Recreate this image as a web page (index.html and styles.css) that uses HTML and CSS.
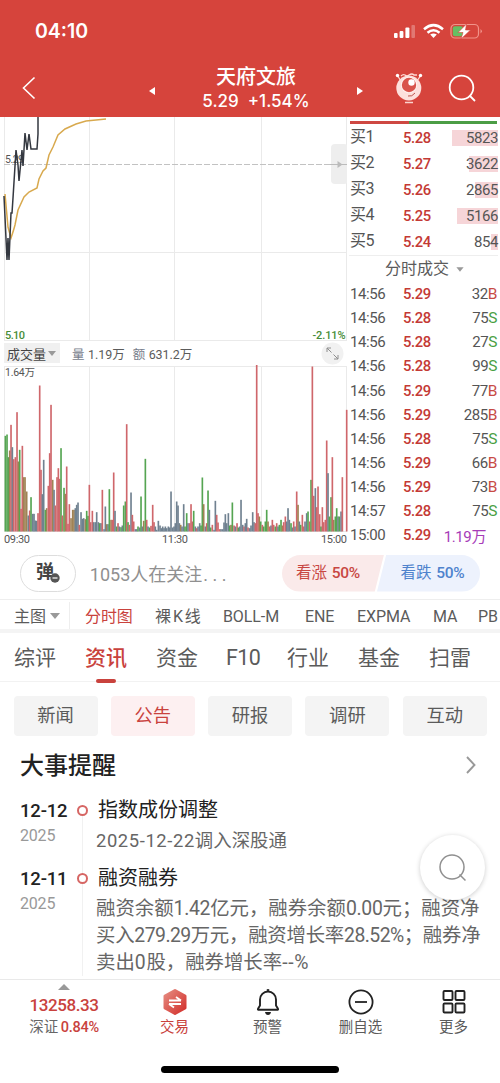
FILE: index.html
```html
<!DOCTYPE html>
<html lang="zh-CN">
<head>
<meta charset="utf-8">
<meta name="viewport" content="width=device-width">
<title>天府文旅</title>
<link rel="stylesheet" href="styles.css">
</head>
<body>
<div class="app">
  <header class="header">
    <div class="status">
      <span class="clock">04:10</span>
      <svg class="status-icons" width="90" height="18" viewBox="0 0 90 18">
        <g fill="#fff"><rect x="2" y="11" width="3.6" height="5" rx="1"/><rect x="7.6" y="9" width="3.8" height="7" rx="1"/><rect x="13.4" y="5.5" width="4" height="10.5" rx="1"/><rect x="19.4" y="3" width="3.6" height="13" rx="1" opacity=".28"/></g>
        <g fill="none" stroke="#fff" stroke-width="2.5"><path d="M32 7.2Q41.500-.9 51 7.200"/><path d="M35.500 10.700Q41.500 5.700 47.500 10.700"/></g><path d="M38.200 12.600Q41.500 10.200 44.800 12.600L41.500 16z" fill="#fff"/>
        <rect x="59" y="2.500" width="27.500" height="13.500" rx="4" fill="none" stroke="#f1938a" stroke-width="1.200"/><rect x="60.800" y="4.300" width="10" height="10" rx="2" fill="#66be63"/><path d="M88.500 7v4.500q3-2.200 0-4.500" fill="#f1938a"/><path d="M74.500 2L66 10.500h5L69 17l9.500-9h-5z" fill="#fff" stroke="#d5443d" stroke-width=".6"/>
      </svg>
    </div>
    <div class="navbar">
      <svg class="back" width="20" height="26" viewBox="0 0 20 26"><path d="M15.500 2.500L4.500 13l11 10.500" fill="none" stroke="#fff" stroke-width="1.600"/></svg>
      <svg class="prev" width="8" height="10" viewBox="0 0 8 10"><path d="M7 1v8L1 5z" fill="#fff"/></svg>
      <div class="title"><h1>天府文旅</h1><p><span>5.29</span><span>+1.54%</span></p></div>
      <svg class="next" width="8" height="10" viewBox="0 0 8 10"><path d="M1 1v8l6-4z" fill="#fff"/></svg>
      <svg class="robot" width="30" height="34" viewBox="0 0 30 34">
        <path d="M3 4l4 6M27 4l-4 6M7 5q2-2 4-1q2 2 4 0q3-2 5 0l3 0" stroke="#ffd8d2" stroke-width="1.300" fill="none"/><circle cx="3.500" cy="4.500" r="1.700" fill="#fff"/><circle cx="26.500" cy="4.500" r="1.700" fill="#fff"/>
        <circle cx="14.800" cy="17" r="12.500" fill="#fde0dc"/><circle cx="15" cy="14" r="8" fill="#fff5f3"/><circle cx="15" cy="14" r="7.200" fill="#d9544c"/><circle cx="17.500" cy="11.500" r="3.200" fill="#fff"/><path d="M14 25q4 1 7-3" stroke="#bd554e" stroke-width="1" fill="none"/><path d="M11 31.500h8" stroke="#fbd3cd" stroke-width="1.500"/>
      </svg>
      <svg class="find" width="32" height="32" viewBox="0 0 32 32" fill="none" stroke="#fff" stroke-width="1.800"><circle cx="14.500" cy="14.500" r="11.800"/><path d="M22.500 22.500l5.500 5.500"/></svg>
    </div>
  </header>

  <main class="market">
    <section class="charts">
      <svg width="347" height="225" viewBox="0 117 347 225">
        <g stroke="#eaeaea" fill="none"><path d="M4.500 117v224M89.500 117v224M174.500 117v224M261.500 117v224M346.500 117v224M4 252.500h343M4 340.500h343"/></g>
        <path d="M4 164.500h343" stroke="#c2c2c2" stroke-dasharray="6 2"/>
        <text x="5" y="163" class="axis" fill="#555" textLength="19">5.29</text>
        <path d="M5 194l3 33 3 11q3-9 4-13l3-15 6-13 5-5 8-4 2-9 4-8 3-3 3-13 4-8 5-12 7-6 11-5 10-3 20-2" fill="none" stroke="#d8a94e" stroke-width="1.500"/>
        <path d="M4 196l3 64 1-22 1 22 2-47h1l1-15 3-48 2 15 1 16 3-31 1 16 2-33 2 17 2-16 2 15h6l1-15v-17" fill="none" stroke="#343840" stroke-width="1.500"/>
        <rect x="331" y="144" width="17" height="40" rx="4" fill="#eee"/><path d="M330 164.500h17" stroke="#bbb"/><path d="M337.500 161l5 3.500-5 3.500z" fill="#bbb"/>
        <text x="5" y="339" class="axis strong" fill="#468c38" textLength="20">5.10</text><text x="312.500" y="339" class="axis strong" fill="#468c38" textLength="33">-2.11%</text>
      </svg>
      <div class="volume-head">
        <span class="metric">成交量<i class="caret"></i></span><span class="lab">量</span><span class="val">1.19万</span><span class="lab">额</span><span class="val">631.2万</span>
        <svg class="expand" width="23" height="23" viewBox="0 0 23 23"><circle cx="11.500" cy="11.500" r="11" fill="#f1f1f1"/><path d="M6 10V6h4M6 6l4.500 4.500M17 13v4h-4M17 17l-4.500-4.500" fill="none" stroke="#8e8e8e"/></svg>
      </div>
      <svg width="349" height="181" viewBox="0 365 349 181">
        <path d="M4.500 366v166M89.500 366v166M174.500 366v166M261.500 366v166M346.500 366v166M4 366.500h343M4 531.500h343" stroke="#eaeaea" fill="none"/>
        <g id="volume"></g>
        <text x="5" y="375.500" class="axis" textLength="30">1.64万</text><text x="4" y="542.500" class="axis time" textLength="26">09:30</text><text x="162" y="542.500" class="axis time" textLength="26">11:30</text><text x="321" y="542.500" class="axis time" textLength="26">15:00</text>
      </svg>
    </section>
    <section class="book">
      <div class="ratio"><i></i><b></b></div>
      <div class="bids">
        <div><span>买1</span><b>5.28</b><em style="--w:46px">5823</em></div>
        <div><span>买2</span><b>5.27</b><em style="--w:29px">3622</em></div>
        <div><span>买3</span><b>5.26</b><em style="--w:23px">2865</em></div>
        <div><span>买4</span><b>5.25</b><em style="--w:41px">5166</em></div>
        <div><span>买5</span><b>5.24</b><em style="--w:7px">854</em></div>
      </div>
      <h2>分时成交<i class="caret"></i></h2>
      <div class="ticks">
        <div><span>14:56</span><b>5.29</b><em>32<i class="up">B</i></em></div>
        <div><span>14:56</span><b>5.28</b><em>75<i>S</i></em></div>
        <div><span>14:56</span><b>5.28</b><em>27<i>S</i></em></div>
        <div><span>14:56</span><b>5.28</b><em>99<i>S</i></em></div>
        <div><span>14:56</span><b>5.29</b><em>77<i class="up">B</i></em></div>
        <div><span>14:56</span><b>5.29</b><em>285<i class="up">B</i></em></div>
        <div><span>14:56</span><b>5.28</b><em>75<i>S</i></em></div>
        <div><span>14:56</span><b>5.29</b><em>66<i class="up">B</i></em></div>
        <div><span>14:56</span><b>5.29</b><em>73<i class="up">B</i></em></div>
        <div><span>14:57</span><b>5.28</b><em>75<i>S</i></em></div>
        <div><span>15:00</span><b>5.29</b><em class="total">1.19万</em></div>
      </div>
    </section>
  </main>

  <section class="poll">
    <div class="danmu">弹<svg width="10" height="10" viewBox="0 0 10 10"><circle cx="5" cy="5" r="4.700" fill="#555"/><path d="M2.500 5h5" stroke="#fff" stroke-width="1.200"/></svg></div>
    <span class="watch">1053人在关注<u>...</u></span>
    <div class="vote"><span class="bull">看涨 <b>50%</b></span><span class="bear">看跌 <b>50%</b></span></div>
  </section>
  <nav class="indicators"><span class="first">主图<i class="caret"></i></span><span class="on">分时图</span><span class="k">裸<u>K</u>线</span><span>BOLL-M</span><span>ENE</span><span>EXPMA</span><span>MA</span><span>PB</span></nav>
  <nav class="tabs"><span>综评</span><span class="on">资讯</span><span>资金</span><span class="f10">F10</span><span>行业</span><span>基金</span><span>扫雷</span></nav>
  <div class="chips"><span>新闻</span><span class="on">公告</span><span>研报</span><span>调研</span><span>互动</span></div>
  <section class="events">
    <div class="events-head"><h2>大事提醒</h2><svg width="12" height="20" viewBox="0 0 12 20"><path d="M2 2l7.500 8L2 18" fill="none" stroke="#999" stroke-width="1.900"/></svg></div>
    <div class="timeline">
      <article class="one"><div class="date"><b>12-12</b><small>2025</small></div><i class="dot"></i><div class="body"><h3>指数成份调整</h3><p class="short"><u>2025-12-22</u>调入深股通</p></div></article>
      <article><div class="date"><b>12-11</b><small>2025</small></div><i class="dot"></i><div class="body"><h3>融资融券</h3><p class="line-a">融资余额<u>1.42</u>亿元，融券余额<u>0.00</u>元；融资净</p><p class="line-b">买入<u>279.29</u>万元，融资增长率<u>28.52%</u>；融券净</p><p class="line-c">卖出<u>0</u>股，融券增长率<u>--%</u></p></div></article>
    </div>
    <div class="float"><svg width="30" height="30" viewBox="0 0 30 30" fill="none" stroke="#909090" stroke-width="1.500"><circle cx="14" cy="14" r="12"/><path d="M21.500 21.500l6 6"/></svg></div>
  </section>
  <footer class="bottom">
    <div class="index"><i class="tri"></i><b>13258.33</b><span>深证 <strong>0.84%</strong></span></div>
    <div class="trade"><svg width="26" height="28" viewBox="0 0 26 28"><defs><linearGradient id="hex" x1="0" y1="0" x2="1" y2="1"><stop stop-color="#e58b80"/><stop offset="1" stop-color="#d32f2b"/></linearGradient></defs><path d="M13 2.500L23 8v12l-10 5.500L3 20V8z" fill="url(#hex)" stroke="url(#hex)" stroke-width="3" stroke-linejoin="round"/><path d="M7 12.500h12M14 9l5 3.500M7 16h12M7 16l5 3.500" fill="none" stroke="#fff" stroke-width="1.800"/></svg><span>交易</span></div>
    <div><svg width="26" height="28" viewBox="0 0 26 28" fill="none" stroke="#222" stroke-width="1.900"><path d="M5 17.500V11.500a8 8 0 0 1 16 0v6l2 3.300q.5 1-1 1H4q-1.500 0-1-1z" stroke-linejoin="round"/><path d="M12 2.600q1-1 2 0"/><path d="M10 24h6q-.5 3-3 3t-3-3" fill="#222" stroke="none"/></svg><span>预警</span></div>
    <div><svg width="26" height="28" viewBox="0 0 26 28" fill="none" stroke="#222" stroke-width="1.800"><circle cx="13" cy="14" r="11.600"/><path d="M7 14h12"/></svg><span>删自选</span></div>
    <div><svg width="26" height="28" viewBox="0 0 26 28" fill="none" stroke="#222" stroke-width="1.900"><rect x="2.500" y="3" width="9" height="9" rx="1"/><rect x="14.500" y="3" width="9" height="9" rx="1"/><rect x="2.500" y="15.500" width="9" height="9" rx="1"/><rect x="14.500" y="15.500" width="9" height="9" rx="1"/></svg><span>更多</span></div>
    <i class="home"></i>
  </footer>
</div>
<script src="volume.js"></script>
</body>
</html>
```
FILE: volume.js
```js
// Each entry: position, top edge and colour (r up, g down, s flat, o mixed), in thirds of a pixel.
const bars = `16,228,g 21,224,g 25,292,g 29,272,o 33,195,r 37,262,s 41,298,r 46,292,r 51,157,r 55,305,o 59,270,g 63,447,r 67,258,r 71,352,o 75,352,o 80,395,o 85,467,s 89,452,r 93,412,g 98,462,s 102,462,s 106,482,s 110,483,s 114,460,r 119,77,r 123,330,r 127,403,s 131,300,s 136,450,g 140,445,o 145,378,r 149,280,r 153,135,r 158,360,o 162,390,s 166,437,r 171,352,r 175,325,r 179,357,r 183,265,g 187,467,r 192,384,g 196,402,o 200,320,r 204,492,r 208,433,r 213,475,o 218,450,o 222,450,o 226,445,s 230,435,s 234,428,s 238,495,r 243,457,s 247,477,s 251,475,s 256,478,o 260,453,g 264,468,g 268,375,r 272,487,r 277,453,r 281,487,s 286,487,s 290,457,s 295,487,s 299,490,g 303,490,s 307,390,r 312,508,s 316,440,s 320,493,o 324,493,s 328,388,g 333,480,o 337,480,r 341,338,r 345,453,s 350,500,g 354,490,r 358,500,s 363,502,g 367,497,s 371,437,g 376,425,g 380,193,r 384,487,g 388,495,r 393,398,s 397,465,r 401,485,r 406,508,s 410,508,s 414,500,g 419,503,s 423,410,g 427,500,s 431,483,o 436,297,g 440,480,r 444,500,s 449,503,g 453,498,r 458,435,r 462,487,r 466,500,s 470,510,s 475,483,s 480,497,s 484,505,s 488,500,s 492,505,s 496,500,s 500,505,s 505,500,s 509,503,s 513,395,s 518,503,s 522,500,s 526,490,s 530,425,s 534,437,s 538,490,s 542,495,o 546,500,s 551,433,s 555,500,g 560,460,g 564,490,s 569,490,r 573,433,r 577,485,r 581,453,g 586,500,s 590,505,r 594,500,s 599,490,s 603,497,g 607,353,g 611,433,o 616,500,s 620,490,r 624,392,g 628,450,s 632,503,g 637,495,r 642,510,s 646,423,s 650,465,r 654,488,r 659,508,r 663,508,s 668,508,s 672,488,s 676,463,s 680,490,s 685,460,s 689,497,g 693,495,o 697,428,g 702,497,r 706,500,s 711,490,r 715,503,g 719,500,s 723,420,s 728,495,s 732,500,r 736,490,s 740,477,s 744,503,r 749,505,s 753,497,s 758,457,s 762,487,s 766,490,r 770,15,r 774,460,r 778,470,o 782,485,g 787,495,r 791,500,g 796,485,g 800,450,g 804,485,o 809,500,r 813,497,s 817,480,r 821,495,r 826,500,g 830,490,r 834,500,s 838,495,g 843,480,g 847,497,o 851,487,r 856,470,r 860,485,s 864,445,s 868,480,s 873,490,g 877,503,s 881,485,r 885,500,s 890,395,r 894,435,o 898,485,s 902,495,g 907,465,r 911,500,r 915,485,s 920,460,s 924,455,g 929,485,r 933,360,g 937,20,r 941,408,r 946,385,s 950,442,r 954,380,r 959,463,r 963,500,g 967,442,r 971,487,r 976,480,r 980,242,r 984,340,s 988,470,g 993,412,g 997,292,r 1001,480,o 1006,470,g 1010,445,g 1014,470,s 1018,470,g 1023,455,s 1027,352,r 1040,150,r`;
const colors = { r: "#cf676b", g: "#55a552", s: "#708190", o: "#a08254" };
document.getElementById("volume").innerHTML = bars.split(" ").map(item => {
  const [x, top, color] = item.split(",");
  const height = (515 - top) / 3;
  return `<rect x="${(x / 3 - 0.8).toFixed(2)}" y="${(531.5 - height).toFixed(2)}" width="1.65" height="${height.toFixed(2)}" fill="${colors[color]}"/>`;
}).join("");
```
FILE: styles.css
```css
* { box-sizing: border-box; }
body { margin: 0; background: #fff; color: #5b5b5b; font-family: Roboto, "Noto Sans CJK SC", sans-serif; }
h1, h2, h3, p { margin: 0; font-weight: 400; }
i, em { font-style: normal; }
u { text-decoration: none; }
.app { width: 500px; height: 1083px; overflow: hidden; display: flex; flex-direction: column; }
.app > * { flex-shrink: 0; }
.header { height: 117px; background: #d6443c; color: #fff; }
.status { height: 60px; padding: 19px 18px 0 35px; display: flex; justify-content: space-between; }
.status-icons { margin-top: 3px; }
.clock { font: 600 19.5px/24px Inter, sans-serif; letter-spacing: 0; }
.navbar { height: 57px; display: grid; grid-template-columns: 20px 109px 8px 31px 138px 31px 8px 30px 30px 23px 32px; padding-left: 19px; align-items: start; }
.back { margin-top: 15px; }
.prev { grid-column: 3; margin-top: 26px; }
.title { grid-column: 5; text-align: center; }
.title h1 { font-size: 20px; line-height: 26px; font-weight: 500; margin-top: 4px; }
.title p { display: flex; justify-content: center; gap: 9px; font: 500 17px/22px Inter, sans-serif; }
.next { grid-column: 7; margin-top: 26px; }
.robot { grid-column: 9; margin-top: 11px; }
.find { grid-column: 11; margin-top: 13px; }

.market { height: 430px; display: flex; }
.charts { width: 349px; }
.charts > svg { display: block; }
.axis { font-size: 10.5px; fill: #555; }
.strong { font-size: 11px; font-weight: 500; fill: #468c38; }
.time { font-size: 11px; }
.volume-head { height: 23px; display: flex; align-items: center; padding: 0 0 1px 4px; font-size: 12.5px; letter-spacing: -.05px; }
.metric { width: 56px; height: 20px; padding-left: 3px; background: #f0f0f0; display: flex; align-items: center; gap: 2px; color: #444; font-size: 13px; }
.caret { display: inline-block; border: 4px solid transparent; border-top: 5px solid #999; border-bottom: 0; }
.lab { margin-left: 12px; width: 12px; color: #777d8b; }
.volume-head .lab + .val { margin-left: 4px; }
.volume-head .val + .lab { margin-left: 8px; }
.expand { margin-left: auto; margin-right: 5px; }
.book { width: 151px; padding-right: 2px; }
.ratio { margin: 4px 1px 0; height: 3px; display: flex; }
.ratio i { width: 59px; background: #ce4842; }
.ratio b { flex: 1; background: #4b9d45; }
.bids, .ticks { font-size: 15px; letter-spacing: -.4px; color: #555; }
.bids { padding-top: 1px; height: 132px; border-bottom: 1px solid #eee; }
.bids > div, .ticks > div { display: grid; grid-template-columns: 54px 28px 1fr; padding-left: 1px; align-items: center; height: 25.9px; }
.ticks > div { height: 24.15px; padding-right: 1px; }
.bids span { font-size: 16px; line-height: 22px; margin-top: -1px; }
.bids b, .ticks b { font-weight: 500; color: #c43a35; font-size: 14.8px; margin-left: -1px; }
.bids em, .ticks em { text-align: right; }
.bids em { height: 16px; line-height: 16px; background: linear-gradient(#f6d5d8, #f6d5d8) right / var(--w) 100% no-repeat; }
.book h2 { height: 24px; margin: 1px 0; padding-left: 36px; font-size: 16px; line-height: 24px; }
.book h2 .caret { margin: 0 0 2px 7px; transform: scale(.9); }
.ticks i { font-size: 15.5px; color: #4aa044; }
.ticks i.up { color: #c84b45; }
.ticks .total { color: #a63bb8; padding-right: 11px; }

.poll { height: 53px; border-bottom: 1px solid #eee; display: flex; align-items: center; padding: 0 20px; }
.danmu { width: 56px; height: 37px; border: 1.5px solid #ddd; border-radius: 19px; padding: 4px 0 0 15px; font-size: 18px; line-height: 23px; font-weight: 700; color: #444; position: relative; }
.danmu svg { position: absolute; left: 29px; top: 17px; }
.watch { margin-left: 14px; font-size: 18px; letter-spacing: 0; color: #909090; width: 193px; white-space: nowrap; }
.watch u { letter-spacing: 4.5px; margin-left: 1px; }
.vote { width: 198px; height: 37px; display: flex; font-size: 15.5px; color: #c84742; }
.vote b { font-weight: 500; letter-spacing: -.4px; margin-left: 1px; }
.bull, .bear { line-height: 37px; padding-left: 14px; white-space: nowrap; }
.bull { width: 102px; background: #faeaea; border-radius: 19px 0 0 19px; clip-path: polygon(0 0, 100% 0, 91% 100%, 0 100%); }
.bear { width: 103px; margin-left: -7px; padding-left: 23.5px; background: #edf2fd; color: #4f83cd; border-radius: 0 19px 19px 0; clip-path: polygon(9% 0, 100% 0, 100% 100%, 0 100%); }
.indicators { height: 33px; border-bottom: 4px solid #f4f4f4; display: grid; grid-template-columns: 71px 70px 68px 82px 52px 76px 45px 22px; padding: 2px 0 0 14px; font-size: 16px; line-height: 29px; white-space: nowrap; overflow: hidden; letter-spacing: -.1px; }
.indicators .first { width: 56px; border-right: 1px solid #eee; }
.first .caret { margin: 0 0 3px 4px; border-width: 6px 5px 0; }
.k u { padding: 0 2px; }
.on { color: #c9423d; }
.tabs { height: 49px; border-bottom: 1px solid #f2f2f2; display: grid; grid-template-columns: 71px 71px 70px 61px 71px 71px 71px; padding-left: 14px; font-size: 21px; line-height: 50px; }
.tabs .on { width: 42px; position: relative; font-weight: 500; }
.tabs .on::after { content: ""; position: absolute; left: 11px; bottom: 0; width: 20px; height: 4px; border-radius: 2px; background: #c9423d; }
.tabs .f10 { letter-spacing: -.6px; font-size: 21.5px; }
.chips { display: grid; grid-template-columns: repeat(5, 84px); gap: 13.3px; padding: 14px 0 0 13.5px; height: 54px; }
.chips span { height: 40px; border-radius: 4px; background: #f4f4f4; font-size: 18.3px; line-height: 40px; text-align: center; }
.chips .on { background: #fdf0f1; }

.events { height: 243px; position: relative; overflow: hidden; }
.events-head { display: flex; justify-content: space-between; align-items: center; padding: 0 23px 0 20px; height: 58px; }
.events-head h2 { font-size: 24px; font-weight: 500; color: #222; margin-top: -4px; }
.timeline { background: linear-gradient(#f1f1f1, #f1f1f1) 82px 17px / 1px 100% no-repeat; }
article { display: grid; grid-template-columns: 57px 12px 1fr; padding-left: 20px; }
.one { height: 68px; }
.date b { display: block; height: 30px; font-size: 18.5px; line-height: 34px; color: #222; font-weight: 500; letter-spacing: -.2px; }
.date small { display: block; font-size: 16px; line-height: 23px; color: #999; letter-spacing: -.2px; }
.dot { width: 11px; height: 11px; border: 2px solid #d66664; border-radius: 50%; background: #fff; margin-top: 11px; }
.body h3 { font-size: 20px; line-height: 33px; padding-left: 9px; color: #222; }
.body p { padding-left: 7px; font-size: 19.4px; line-height: 27px; white-space: nowrap; color: #666; }
.body p u { letter-spacing: -.55px; }
.body .line-a u { letter-spacing: -.3px; }
.body .line-b { letter-spacing: -.22px; }
.body .line-c u { letter-spacing: .7px; }
.body .short { font-size: 18.4px; }
.body .short u { letter-spacing: .6px; }
.float { position: absolute; left: 420px; top: 99px; width: 65px; height: 65px; border-radius: 50%; background: #fff; box-shadow: 0 1px 5px #0003; display: grid; place-items: center; }

.bottom { position: relative; height: 105px; border-top: 1px solid #e9e9e9; display: grid; grid-template-columns: 128px 93px 93px 93px 93px; align-items: start; font-size: 14.5px; line-height: 24px; }
.bottom > div { display: flex; flex-direction: column; align-items: center; padding-top: 8px; }
.bottom .trade { color: #c9423d; }
.bottom .index { padding-top: 4px; color: #c9423d; }
.tri { border: 6px solid transparent; border-bottom-color: #999; border-top: 0; }
.index b { font-size: 17px; line-height: 28px; font-weight: 500; margin-top: 1px; letter-spacing: -.45px; }
.index span { color: #666; line-height: 18px; white-space: nowrap; }
.index strong { color: #c9423d; font-weight: 500; letter-spacing: -.3px; margin-left: -1px; }
.home { position: absolute; left: 161px; bottom: 11px; width: 178px; height: 7px; border-radius: 4px; background: #000; }
```
